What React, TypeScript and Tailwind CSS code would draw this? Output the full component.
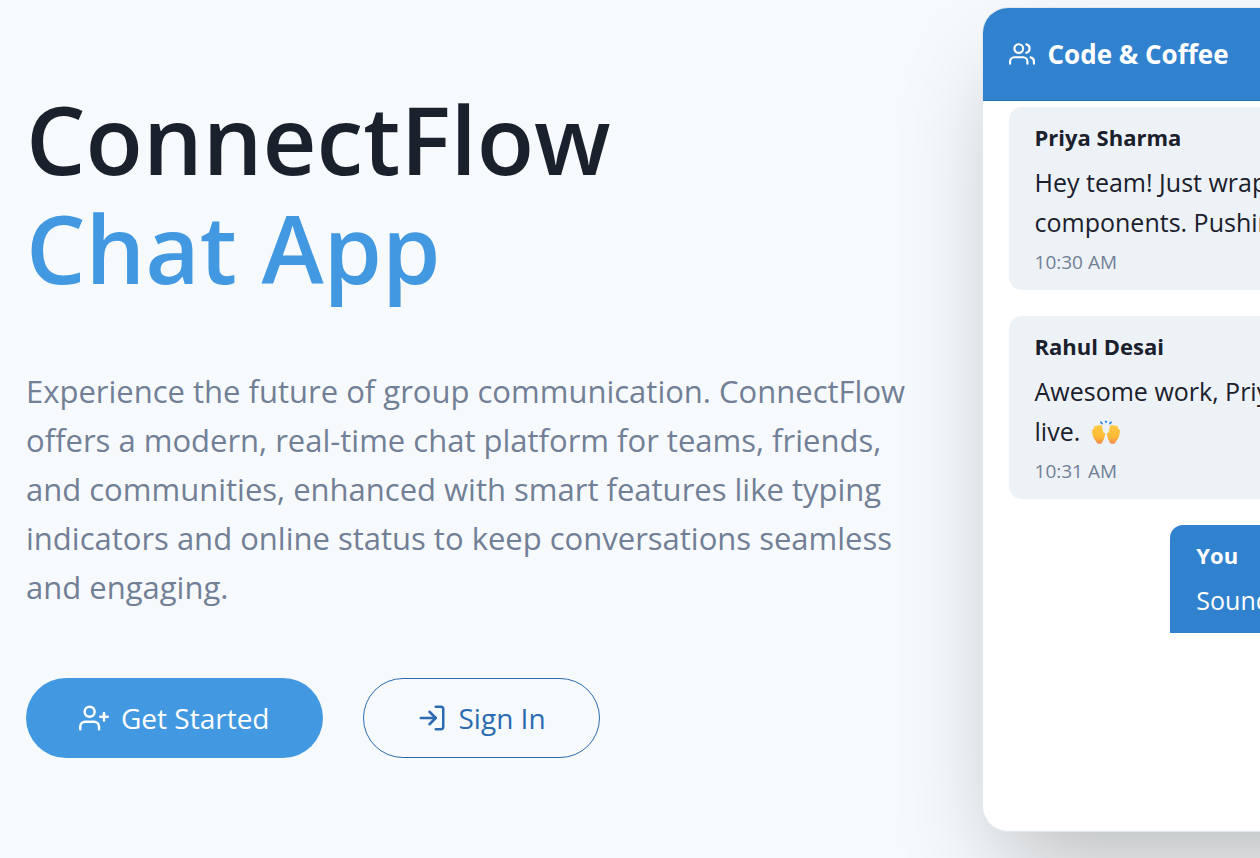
import { FiLogIn, FiUserPlus, FiUsers } from "react-icons/fi";

function RaisedHands() {
  return (
    <svg viewBox="0 0 30 26" className="ml-1 inline-block h-[26px] w-[30px] align-[-5px]" role="img" aria-label="Raised hands">
      <defs>
        <linearGradient id="palm" x1="0" y1="0" x2="0" y2="1">
          <stop offset="0" stopColor="#ffcf4a" />
          <stop offset="0.65" stopColor="#fcb936" />
          <stop offset="1" stopColor="#f28a55" />
        </linearGradient>
        <path
          id="hand"
          d="M4.2 6.1C5 5.4 5.9 5.5 6.3 6.2C6.8 4.7 8.3 4.5 8.9 5.6C9.9 4.9 11.1 5.4 11.2 6.6L12 11.2L12.8 12.7C13.7 12.4 14.5 13.2 14.2 14.3L13.4 17.5C12.9 19.7 11.7 20.6 11.3 22.4C11 24.2 6.2 24.3 5.6 22.6C5.1 20.9 3.4 20 2.4 17.5C1.5 15.2 1 12.6 1.1 10.8C1.2 9.4 2 8.8 2.8 9C2.6 7.4 3 6.4 4.2 6.1Z"
        />
      </defs>
      <use href="#hand" fill="url(#palm)" />
      <path d="M2.8 9l1.4 4.3M6.3 6.3l1 5.6M8.9 5.7l.7 5.8" stroke="#f5aa30" strokeWidth="0.5" fill="none" />
      <g transform="translate(30 0) scale(-1 1)">
        <use href="#hand" fill="url(#palm)" />
        <path d="M2.8 9l1.4 4.3M6.3 6.3l1 5.6M8.9 5.7l.7 5.8" stroke="#f5aa30" strokeWidth="0.5" fill="none" />
      </g>
      <path d="M10 2.3l1 1.2M20 2.3l-1 1.2" stroke="#2f86e0" strokeWidth="1.8" strokeLinecap="round" />
      <path d="M14 1.2h2L15 3z" fill="#2f86e0" stroke="#2f86e0" strokeWidth="0.7" strokeLinejoin="round" />
    </svg>
  );
}

export default function App() {
  return (
    <main className="flex min-h-screen w-full overflow-hidden bg-[#f7fafc] font-['Open_Sans','Noto_Sans',sans-serif] text-[#1a202c]">
      <section className="w-[77.9%] shrink-0 pt-[85px] pr-[60px] pl-[26px]">
        <h1 className="text-[94px] leading-[109px] font-semibold">
          <span className="block">ConnectFlow </span>
          <span className="block text-[#4299e1]">Chat App</span>
        </h1>
        <p className="mt-[64px] text-[31px] leading-[49px] text-[#718096]">
          Experience the future of group communication. ConnectFlow offers a modern, real-time chat platform for teams,
          friends, and communities, enhanced with smart features like typing indicators and online status to keep
          conversations seamless and engaging.
        </p>
        <div className="mt-[66px] flex gap-10">
          <button className="flex h-20 items-center gap-3 rounded-[40px] bg-[#4299e1] px-[53px] text-[28px] text-white">
            <FiUserPlus size={30} aria-hidden="true" />
            Get Started
          </button>
          <button className="flex h-20 items-center gap-3 rounded-[40px] border border-[#2b6cb0] px-[53px] text-[28px] text-[#2b6cb0]">
            <FiLogIn size={30} aria-hidden="true" />
            Sign In
          </button>
        </div>
      </section>

      <section className="mt-[7px] mb-[26px] flex w-[68.5%] shrink-0 flex-col overflow-hidden rounded-[26px] border border-[#e2e8f0] bg-white shadow-[0_50px_99px_-20px_rgba(0,0,0,0.25)]">
        <header className="flex h-[93px] shrink-0 items-center gap-[13px] border-b border-[#2b6cb0] bg-[#3182ce] px-[26px] text-white">
          <FiUsers size={26} aria-hidden="true" />
          <h2 className="text-[26px] font-bold">Code &amp; Coffee</h2>
        </header>
        <div className="flex h-[532px] shrink-0 flex-col gap-[26px] overflow-hidden px-[26px] pt-[6px]">
          <article className="w-[80%] shrink-0 rounded-[13px] bg-[#edf2f7] px-[26px] pt-3 pb-2">
            <h3 className="text-[22px] leading-9 font-bold">Priya Sharma</h3>
            <p className="mt-[7px] text-[25px] leading-10">
              Hey team! Just wrapped up the new UI
              <br />
              components. Pushing to staging now.
            </p>
            <time className="block text-[19px] leading-10 text-[#718096]">10:30 AM</time>
          </article>
          <article className="w-[80%] shrink-0 rounded-[13px] bg-[#edf2f7] px-[26px] pt-3 pb-2">
            <h3 className="text-[22px] leading-9 font-bold">Rahul Desai</h3>
            <p className="mt-[7px] text-[25px] leading-10">
              Awesome work, Priya! Can't wait to see it
              <br />
              live. <RaisedHands />
            </p>
            <time className="block text-[19px] leading-10 text-[#718096]">10:31 AM</time>
          </article>
          <article className="w-[80%] shrink-0 self-end rounded-[13px] bg-[#3182ce] px-[26px] pt-3 pb-10 text-white">
            <h3 className="text-[22px] leading-9 font-bold">You</h3>
            <p className="mt-[7px] text-[25px] leading-10">Sounds great, team!</p>
          </article>
        </div>
      </section>
    </main>
  );
}
